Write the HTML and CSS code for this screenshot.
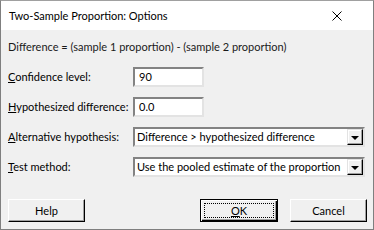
FILE: index.html
```html
<!DOCTYPE html>
<html lang="en">
<head>
    <meta charset="UTF-8">
    <title>Two-Sample Proportion: Options</title>
    <link rel="stylesheet" href="styles.css">
</head>
<body>
    <div class="dialog">
        <div class="titlebar">
            <span class="title">Two-Sample Proportion: Options</span>
            <svg class="close" width="10" height="10" viewBox="0 0 10 10">
                <path d="M0.5 0.5 L9.5 9.5 M9.5 0.5 L0.5 9.5" stroke="#000" stroke-width="1" fill="none"/>
            </svg>
        </div>
        <div class="content">
            <p class="desc">Difference = (sample 1 proportion) - (sample 2 proportion)</p>
            <div class="form">
                <label><u>C</u>onfidence level:</label>
                <div class="textbox">90</div>

                <label><u>H</u>ypothesized difference:</label>
                <div class="textbox">0.0</div>

                <label><u>A</u>lternative hypothesis:</label>
                <div class="combo">
                    <span class="combo-text">Difference &gt; hypothesized difference</span>
                    <span class="combo-btn"><span class="arrow"></span></span>
                </div>

                <label><u>T</u>est method:</label>
                <div class="combo">
                    <span class="combo-text">Use the pooled estimate of the proportion</span>
                    <span class="combo-btn"><span class="arrow"></span></span>
                </div>
            </div>
            <div class="buttons">
                <button class="btn">Help</button>
                <span class="spacer"></span>
                <button class="btn btn-default"><span class="focus"><u>O</u>K</span></button>
                <button class="btn">Cancel</button>
            </div>
        </div>
    </div>
</body>
</html>
```

FILE: styles.css
```css
* {
    box-sizing: border-box;
    margin: 0;
    padding: 0;
}

body {
    font-family: Lato, "Liberation Sans", sans-serif;
    font-size: 11px;
    color: #000;
    background: #fff;
}

.dialog {
    width: 374px;
    height: 230px;
    border: 1px solid #7f7f7f;
    border-top-color: #a0a0a0;
    display: flex;
    flex-direction: column;
    background: #f0f0f0;
}

.titlebar {
    height: 29px;
    background: #fff;
    display: flex;
    align-items: center;
    padding: 0 0 0 8px;
}

.title {
    flex: 1;
    font-size: 11px;
    line-height: 16px;
    color: #000;
}

.close {
    margin-right: 31px;
}

.content {
    flex: 1;
    padding: 9px 6px 6px 7px;
    display: flex;
    flex-direction: column;
}

.desc {
    line-height: 16px;
    color: #1a1a1a;
}

.form {
    margin-top: 12px;
    display: grid;
    grid-template-columns: 125px auto;
    grid-template-rows: repeat(4, 20px);
    row-gap: 10px;
    align-items: center;
}

.form label {
    line-height: 16px;
    white-space: nowrap;
}

.textbox {
    width: 71px;
    height: 20px;
    background: #fff;
    border-top: 2px solid #838383;
    border-left: 2px solid #838383;
    border-right: 2px solid #e3e3e3;
    border-bottom: 2px solid #e3e3e3;
    padding: 0 4px;
    line-height: 16px;
}

.combo {
    width: 232px;
    height: 20px;
    background: #fff;
    border-top: 2px solid #838383;
    border-left: 2px solid #838383;
    border-right: 2px solid #e3e3e3;
    border-bottom: 2px solid #e3e3e3;
    display: flex;
}

.combo-text {
    flex: 1;
    padding-left: 2px;
    line-height: 16px;
    white-space: nowrap;
    overflow: hidden;
}

.combo-btn {
    width: 16px;
    height: 16px;
    background: #f0f0f0;
    border-top: 1px solid #e3e3e3;
    border-left: 1px solid #e3e3e3;
    border-right: 1px solid #000;
    border-bottom: 1px solid #000;
    box-shadow: inset -1px -1px 0 #a0a0a0, inset 1px 1px 0 #fff;
    display: flex;
    align-items: center;
    justify-content: center;
}

.arrow {
    width: 0;
    height: 0;
    border-left: 4px solid transparent;
    border-right: 4px solid transparent;
    border-top: 4px solid #000;
    margin-top: 1px;
}

.buttons {
    margin-top: 22px;
    display: flex;
    gap: 12px;
}

.spacer {
    flex: 1;
}

.btn {
    width: 77px;
    height: 23px;
    font-family: inherit;
    font-size: 11px;
    color: #000;
    background: #f0f0f0;
    border-top: 1px solid #fff;
    border-left: 1px solid #fff;
    border-right: 1px solid #000;
    border-bottom: 1px solid #000;
    box-shadow: inset -1px -1px 0 #a0a0a0;
    cursor: pointer;
}

.btn-default {
    width: 78px;
    border: 1px solid #000;
    box-shadow: inset 1px 1px 0 #fff, inset -1px -1px 0 #000, inset -2px -2px 0 #a0a0a0;
    padding: 3px;
}

.focus {
    display: flex;
    align-items: center;
    justify-content: center;
    height: 100%;
    border: 1px dotted #000;
}
```
